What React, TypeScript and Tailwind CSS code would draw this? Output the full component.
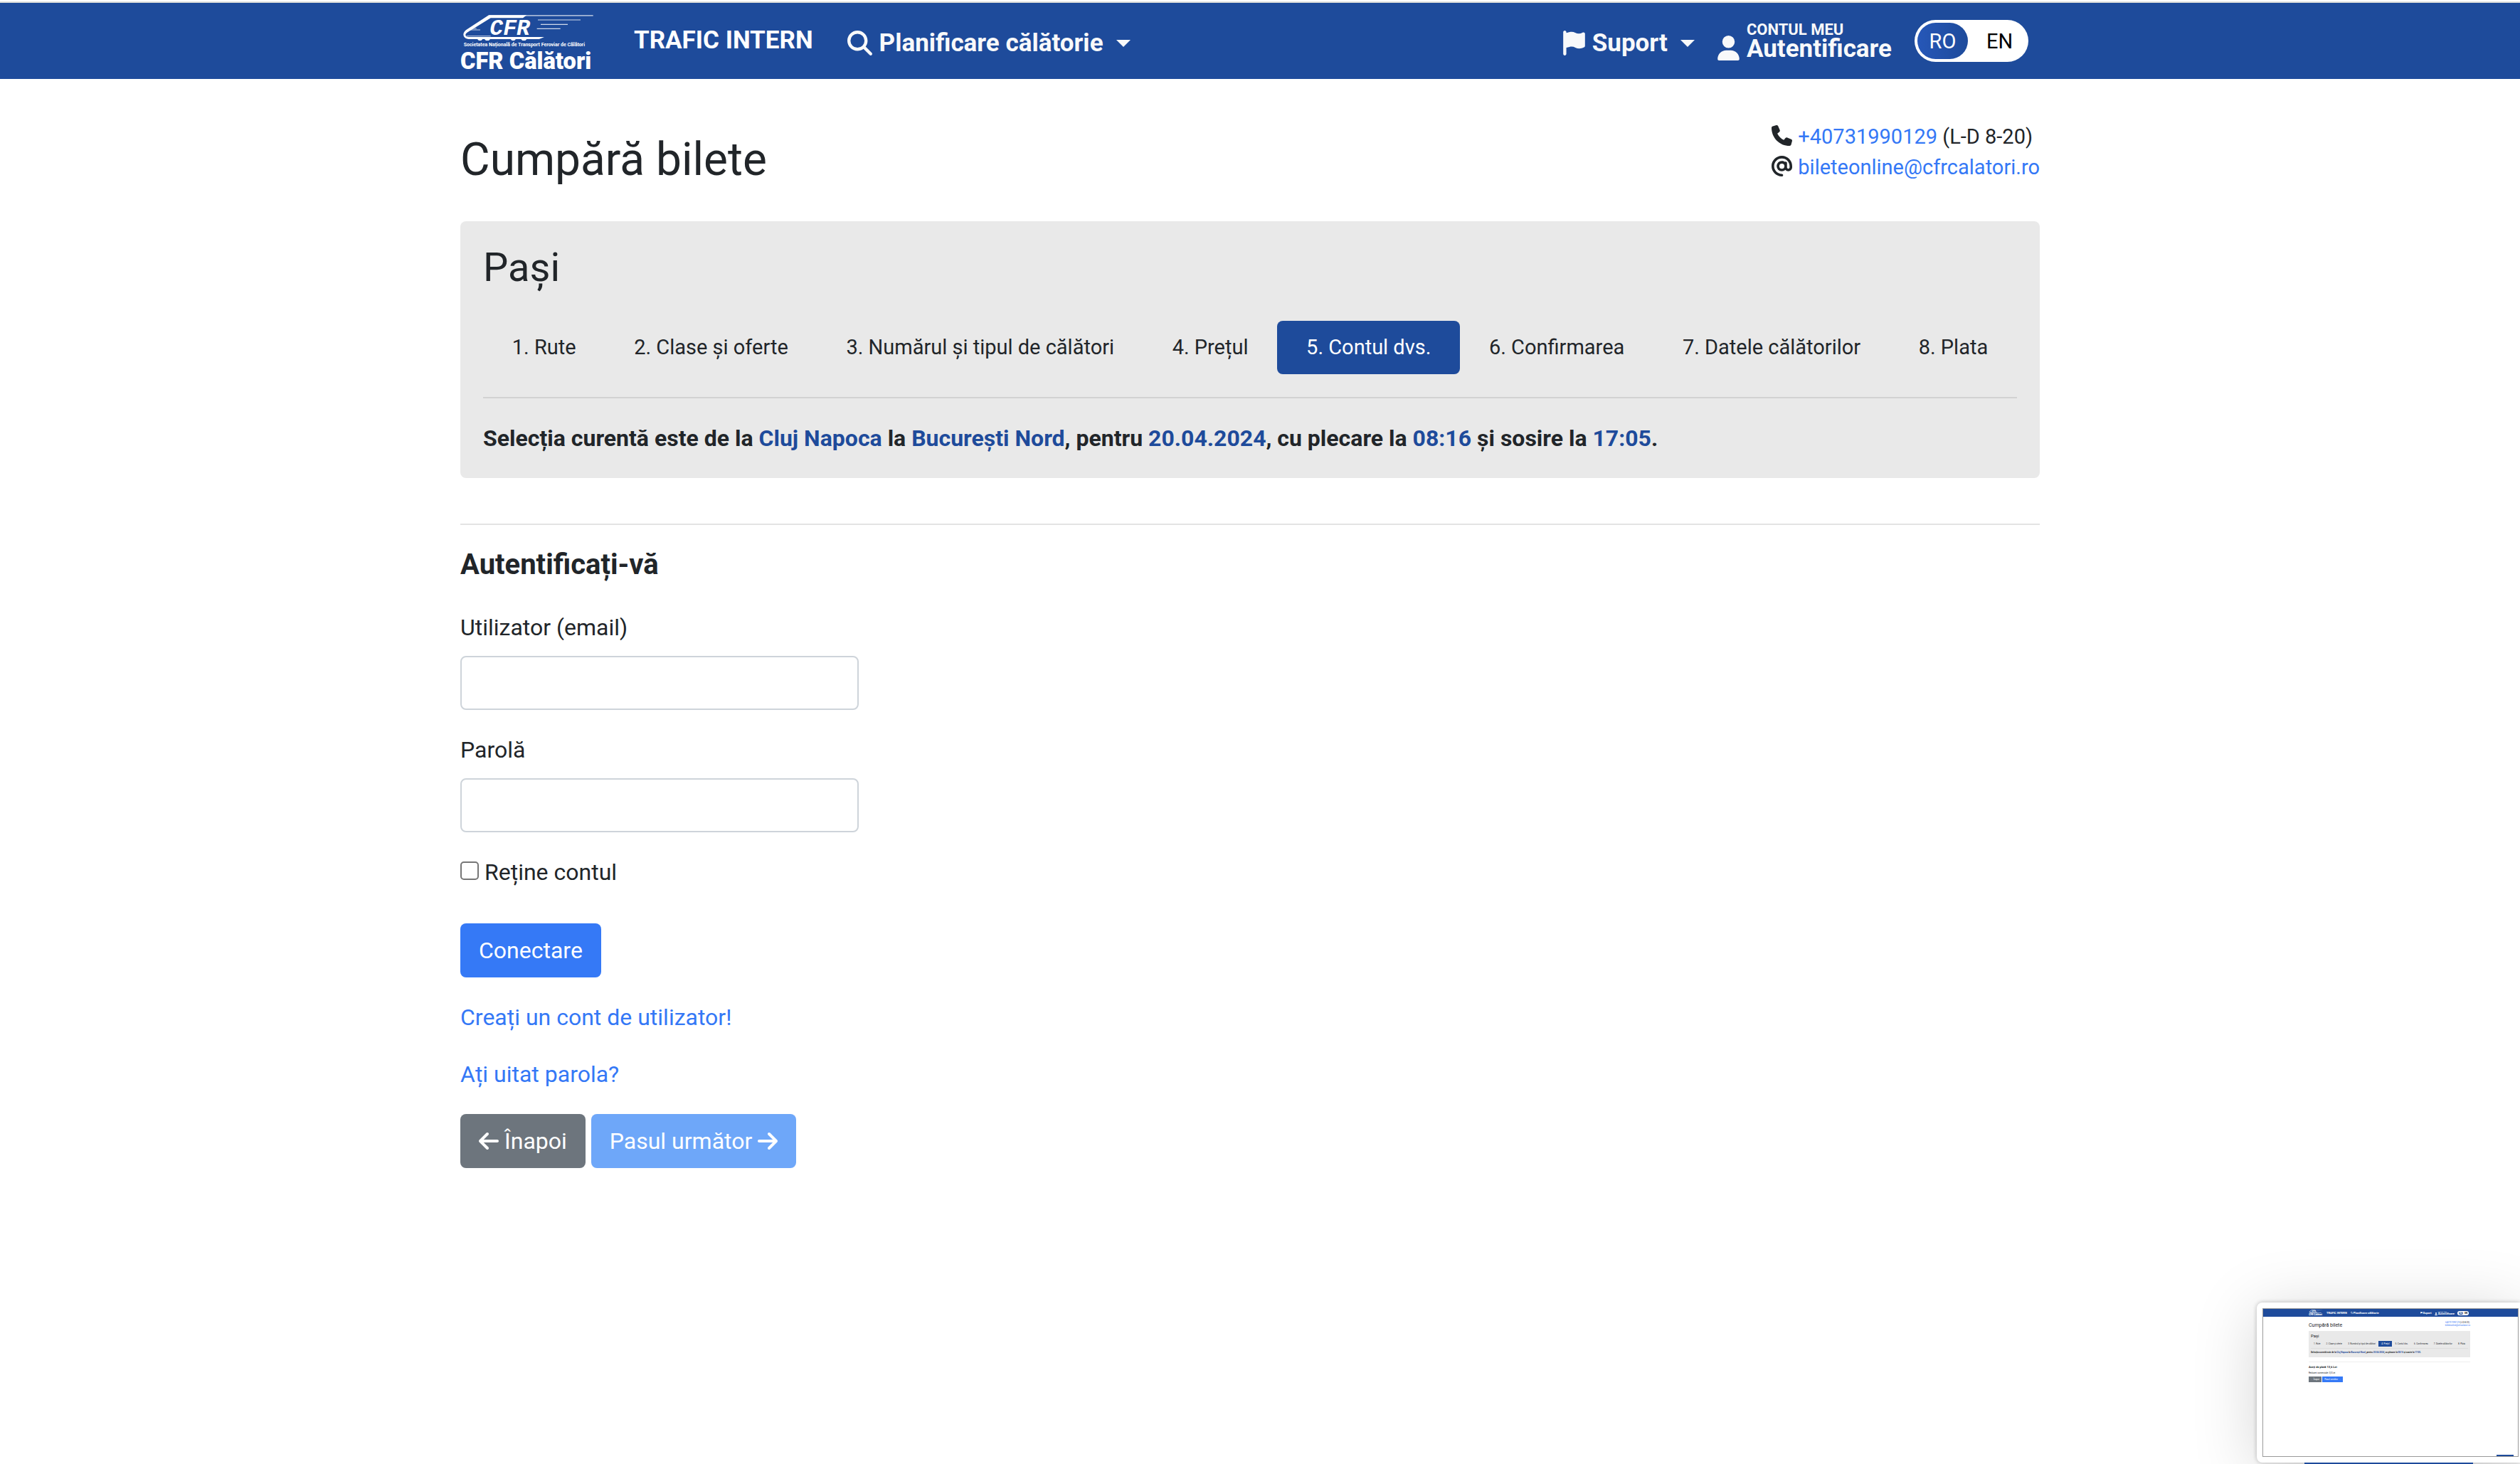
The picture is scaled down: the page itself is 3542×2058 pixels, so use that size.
import { useState } from "react";
import type { ReactNode } from "react";
import {
  FaArrowLeft,
  FaArrowRight,
  FaAt,
  FaFlag,
  FaMagnifyingGlass,
  FaPhone,
  FaUser,
} from "react-icons/fa6";

const steps = [
  "1. Rute",
  "2. Clase și oferte",
  "3. Numărul și tipul de călători",
  "4. Prețul",
  "5. Contul dvs.",
  "6. Confirmarea",
  "7. Datele călătorilor",
  "8. Plata",
];

function Logo({ className }: { className: string }) {
  return (
    <svg viewBox="48 54 576 267" className={className} role="img" aria-label="CFR Călători">
      <g fill="none" stroke="#ffffff">
        <path d="M170 62.5H608" strokeWidth="5" opacity="0.6" />
        <path d="M375 81H555M387 100H501M371 118H470" strokeWidth="3.5" opacity="0.8" />
        <path d="M74 149H176M84 123H132M90 117H116" strokeWidth="2.5" opacity="0.9" />
      </g>
      <path
        fill="#ffffff"
        d="M168 61H328L312 73H176L96 122C82 130 70 137 70 144C70 150 75 153 84 153H402L380 162H328L322 168H310L304 162H282L276 168H266L260 162H174L168 168H156L150 162H142L136 168H126L120 162H84C70 161 61 153 61 142C62 133 67 127 76 121Z"
      />
      <text
        x="172"
        y="143"
        fill="#ffffff"
        fontFamily="Liberation Mono, monospace"
        fontStyle="italic"
        fontWeight="700"
        fontSize="94"
      >
        CFR
      </text>
      <text x="62" y="193" fill="#ffffff" fontFamily="Roboto, sans-serif" fontWeight="700" fontSize="21">
        Societatea Națională de Transport Feroviar de Călători
      </text>
      <text x="48" y="288" fill="#ffffff" fontFamily="Roboto, sans-serif" fontWeight="900" fontSize="98">
        CFR Călători
      </text>
    </svg>
  );
}

function Caret() {
  return (
    <svg viewBox="0 0 20 10" className="h-[10px] w-5 fill-current" aria-hidden="true">
      <path d="M0 0H20L10 10Z" />
    </svg>
  );
}

function Header() {
  return (
    <header className="border-t-2 border-white bg-[#1e4b9b]">
      <div className="border-t-2 border-[#dfdfdb] pr-7">
        <nav className="mx-auto flex h-[107px] w-full max-w-[2220px] items-center text-[35px] leading-[46px] font-bold text-[#f8f9fa]">
          <a href="#acasa" className="pt-3">
            <Logo className="h-[89px] w-48" />
          </a>
          <a href="#trafic" className="mb-[2px] ml-[52px] whitespace-nowrap text-white">
            TRAFIC INTERN
          </a>
          <button type="button" className="ml-12 flex items-center gap-[10px] pt-[6px] whitespace-nowrap">
            <FaMagnifyingGlass className="size-[35px]" />
            Planificare călătorie
            <span className="ml-2">
              <Caret />
            </span>
          </button>
          <button type="button" className="ml-auto flex items-center gap-[10px] pt-[6px]">
            <FaFlag className="h-[35px] w-[31px]" />
            Suport
            <span className="ml-2">
              <Caret />
            </span>
          </button>
          <a href="#autentificare" className="ml-8 flex items-end gap-[10px]">
            <FaUser className="h-[35px] w-[31px]" />
            <span className="flex flex-col">
              <span className="text-[22px] leading-[22px]">CONTUL MEU</span>
              <span className="leading-[32px]">Autentificare</span>
            </span>
          </a>
          <div className="mr-4 ml-8 flex h-[59px] w-40 items-center rounded-full bg-white p-1 text-[29px] leading-[50px] font-normal">
            <button
              type="button"
              className="h-[51px] w-[71px] rounded-full bg-linear-to-r from-[#2657b8] to-[#1e4b9b] text-white"
            >
              RO
            </button>
            <button type="button" className="flex-1 pl-2 text-black">
              EN
            </button>
          </div>
        </nav>
      </div>
    </header>
  );
}

function Contact() {
  return (
    <address className="flex flex-col text-[29px] leading-[43px] whitespace-nowrap not-italic">
      <span className="flex items-center gap-2">
        <FaPhone className="mb-1 size-[29px]" />
        <span>
          <a href="tel:+40731990129" className="text-[#3478f6]">
            +40731990129
          </a>{" "}
          (L-D 8-20)
        </span>
      </span>
      <span className="flex items-center gap-2">
        <FaAt className="mb-1 size-[29px]" />
        <a href="mailto:bileteonline@cfrcalatori.ro" className="text-[#3478f6]">
          bileteonline@cfrcalatori.ro
        </a>
      </span>
    </address>
  );
}

function Hi({ children }: { children: ReactNode }) {
  return <span className="text-[#1e4b9b]">{children}</span>;
}

function Selection() {
  return (
    <>
      Selecția curentă este de la <Hi>Cluj Napoca</Hi> la <Hi>București Nord</Hi>, pentru{" "}
      <Hi>20.04.2024</Hi>, cu plecare la <Hi>08:16</Hi> și sosire la <Hi>17:05</Hi>.
    </>
  );
}

function StepsPanel() {
  return (
    <section className="rounded-lg bg-[#e9e9e9] p-8">
      <h2 className="text-[56px] leading-[66px]">Pași</h2>
      <ol className="mt-[42px] flex text-[29px] leading-[43px] whitespace-nowrap">
        {steps.map((step, i) => (
          <li key={step} className="flex-auto">
            <button
              type="button"
              className={
                i === 4
                  ? "w-full rounded-lg bg-[#1e4b9b] py-4 text-center text-white"
                  : "w-full rounded-lg py-4 text-center"
              }
            >
              <span className="px-10">{step}</span>
            </button>
          </li>
        ))}
      </ol>
      <hr className="my-8 border-t-2 border-[#d2d2d2]" />
      <p className="text-[32px] leading-[48px] font-bold">
        <Selection />
      </p>
    </section>
  );
}

function LoginForm() {
  const [user, setUser] = useState("");
  const [password, setPassword] = useState("");
  const [remember, setRemember] = useState(false);
  const field = "mt-4 h-[76px] w-[560px] rounded-lg border-2 border-[#ced4da] bg-white px-6";
  return (
    <form className="flex flex-col items-start" onSubmit={(e) => e.preventDefault()}>
      <h2 className="text-[40px] leading-[48px] font-bold">Autentificați-vă</h2>
      <label htmlFor="user" className="mt-10">
        Utilizator (email)
      </label>
      <input id="user" type="email" value={user} onChange={(e) => setUser(e.target.value)} className={field} />
      <label htmlFor="password" className="mt-8">
        Parolă
      </label>
      <input
        id="password"
        type="password"
        value={password}
        onChange={(e) => setPassword(e.target.value)}
        className={field}
      />
      <div className="mt-8 flex items-center gap-2">
        <input
          id="remember"
          type="checkbox"
          checked={remember}
          onChange={(e) => setRemember(e.target.checked)}
          className="mb-1 size-[26px] appearance-none rounded-[5px] border-2 border-[#767676] bg-white checked:bg-[#3478f6]"
        />
        <label htmlFor="remember">Reține contul</label>
      </div>
      <button type="submit" className="mt-12 h-[76px] rounded-lg bg-[#3579f6] px-[26px] text-white">
        Conectare
      </button>
      <a href="#cont" className="mt-8 text-[#3478f6]">
        Creați un cont de utilizator!
      </a>
      <a href="#parola" className="mt-8 text-[#3478f6]">
        Ați uitat parola?
      </a>
      <div className="mt-8 flex gap-2">
        <button
          type="button"
          className="flex h-[76px] items-center gap-2 rounded-lg bg-[#6d757d] px-[26px] text-white"
        >
          <FaArrowLeft className="h-8 w-7" />
          Înapoi
        </button>
        <button
          type="button"
          disabled
          className="flex h-[76px] items-center gap-2 rounded-lg bg-[#6ea7f9] px-[26px] text-white"
        >
          Pasul următor
          <FaArrowRight className="h-8 w-7" />
        </button>
      </div>
    </form>
  );
}

function MiniPreview() {
  return (
    <aside className="fixed right-0 bottom-0 w-[370px] overflow-visible">
      <div className="rounded-l-lg bg-white py-2 pr-[2px] pl-2 shadow-[0_0_6px_rgba(0,0,0,0.25),0_12px_90px_rgba(0,0,0,0.17)]">
        <div className="h-[209px] border border-[#9a9a9a] bg-white text-[3px] leading-[4px]">
          <div className="flex h-[11px] items-center bg-[#1e4b9b] pr-[69px] pl-16 font-bold text-white">
            <Logo className="h-[9px] w-[20px]" />
            <span className="ml-[5px] text-[4px]">TRAFIC INTERN</span>
            <span className="ml-[5px] flex items-center gap-px text-[4px]">
              <FaMagnifyingGlass className="size-[3px]" />
              Planificare călătorie
            </span>
            <span className="ml-auto flex items-center gap-px text-[4px]">
              <FaFlag className="size-[3px]" />
              Suport
            </span>
            <span className="mr-1 ml-1 flex items-end gap-px text-[4px]">
              <FaUser className="size-[4px]" />
              <span className="flex flex-col">
                <span className="text-[2px] leading-[2px]">CONTUL MEU</span>
                <span>Autentificare</span>
              </span>
            </span>
            <span className="flex h-[6px] w-4 items-center justify-between rounded-full bg-white px-[2px] text-black">
              <span className="rounded-full bg-[#1e4b9b] px-px text-white">RO</span>
              <span>EN</span>
            </span>
          </div>
          <div className="pr-[67px] pl-16">
            <div className="flex h-5 items-center justify-between">
              <span className="pt-1 text-[7px] leading-[8px]">Cumpără bilete</span>
              <span className="flex flex-col">
                <span>
                  <span className="text-[#3478f6]">+40731990129</span> (L-D 8-20)
                </span>
                <span className="text-[#3478f6]">bileteonline@cfrcalatori.ro</span>
              </span>
            </div>
            <div className="h-[37px] bg-[#e9e9e9] px-[3px] pt-[3px]">
              <div className="text-[6px] leading-[7px]">Pași</div>
              <div className="mt-1 flex justify-between whitespace-nowrap">
                {steps.map((step, i) => (
                  <span
                    key={step}
                    className={i === 3 ? "bg-[#1e4b9b] px-1 py-[2px] text-white" : "px-1 py-[2px]"}
                  >
                    {step}
                  </span>
                ))}
              </div>
              <div className="mt-[2px] border-t border-[#dddddd] pt-[3px] font-bold">
                <Selection />
              </div>
            </div>
            <div className="mt-[6px] border-t border-[#eeeeee] pt-1 text-[4px] leading-[5px] font-bold">
              Aveți de plată 13,6 Lei
            </div>
            <div className="mt-1">Reduceri comerciale: 0,0 Lei</div>
            <div className="mt-[3px] flex gap-px text-white">
              <span className="flex h-2 w-[18px] items-center justify-center bg-[#6d757d]">← Înapoi</span>
              <span className="flex h-2 w-[29px] items-center justify-center bg-[#3579f6]">
                Pasul următor →
              </span>
            </div>
          </div>
          <div className="absolute right-[9px] bottom-[11px] h-[2px] w-6 bg-[#1e4b9b]" />
        </div>
      </div>
      <div className="mr-[66px] ml-[67px] h-[2px] bg-[#1e4b9b]" />
    </aside>
  );
}

export default function App() {
  return (
    <div className="min-h-screen bg-white font-['Roboto',sans-serif] text-[32px] leading-[48px] text-[#212529]">
      <Header />
      <div className="pr-7">
        <main className="mx-auto w-full max-w-[2220px] pt-15 pb-16">
          <div className="flex items-start justify-between pb-12">
            <h1 className="mt-4 text-[64px] leading-[76px]">Cumpără bilete</h1>
            <Contact />
          </div>
          <StepsPanel />
          <hr className="mt-16 mb-8 border-t-2 border-[#e3e3e3]" />
          <LoginForm />
        </main>
      </div>
      <MiniPreview />
    </div>
  );
}
